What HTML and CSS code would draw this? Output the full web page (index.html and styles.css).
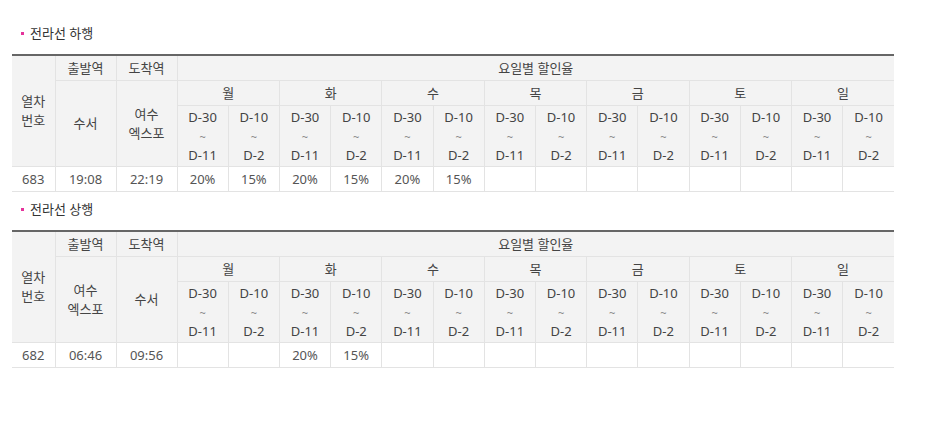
FILE: index.html
```html
<!DOCTYPE html>
<html lang="ko">
<head>
<meta charset="utf-8">
<title>전라선 할인율</title>
<link rel="stylesheet" href="styles.css">
</head>
<body>
<div class="wrap">
  <h3 class="tit">전라선 하행</h3>
  <table class="tbl">
    <colgroup>
      <col class="c-no"><col class="c-st"><col class="c-st">
      <col><col><col><col><col><col><col><col><col><col><col><col><col><col>
    </colgroup>
    <thead>
      <tr class="r1">
        <th rowspan="3">열차<br>번호</th>
        <th>출발역</th>
        <th>도착역</th>
        <th colspan="14">요일별 할인율</th>
      </tr>
      <tr class="r2">
        <th rowspan="2">수서</th>
        <th rowspan="2">여수<br>엑스포</th>
        <th colspan="2">월</th><th colspan="2">화</th><th colspan="2">수</th><th colspan="2">목</th><th colspan="2">금</th><th colspan="2">토</th><th colspan="2">일</th>
      </tr>
      <tr class="r3">
        <th>D-30<br><span class="tl">~</span><br>D-11</th><th>D-10<br><span class="tl">~</span><br>D-2</th>
        <th>D-30<br><span class="tl">~</span><br>D-11</th><th>D-10<br><span class="tl">~</span><br>D-2</th>
        <th>D-30<br><span class="tl">~</span><br>D-11</th><th>D-10<br><span class="tl">~</span><br>D-2</th>
        <th>D-30<br><span class="tl">~</span><br>D-11</th><th>D-10<br><span class="tl">~</span><br>D-2</th>
        <th>D-30<br><span class="tl">~</span><br>D-11</th><th>D-10<br><span class="tl">~</span><br>D-2</th>
        <th>D-30<br><span class="tl">~</span><br>D-11</th><th>D-10<br><span class="tl">~</span><br>D-2</th>
        <th>D-30<br><span class="tl">~</span><br>D-11</th><th>D-10<br><span class="tl">~</span><br>D-2</th>
      </tr>
    </thead>
    <tbody>
      <tr>
        <td>683</td><td>19:08</td><td>22:19</td>
        <td>20%</td><td>15%</td><td>20%</td><td>15%</td><td>20%</td><td>15%</td>
        <td></td><td></td><td></td><td></td><td></td><td></td><td></td><td></td>
      </tr>
    </tbody>
  </table>

  <h3 class="tit">전라선 상행</h3>
  <table class="tbl">
    <colgroup>
      <col class="c-no"><col class="c-st"><col class="c-st">
      <col><col><col><col><col><col><col><col><col><col><col><col><col><col>
    </colgroup>
    <thead>
      <tr class="r1">
        <th rowspan="3">열차<br>번호</th>
        <th>출발역</th>
        <th>도착역</th>
        <th colspan="14">요일별 할인율</th>
      </tr>
      <tr class="r2">
        <th rowspan="2">여수<br>엑스포</th>
        <th rowspan="2">수서</th>
        <th colspan="2">월</th><th colspan="2">화</th><th colspan="2">수</th><th colspan="2">목</th><th colspan="2">금</th><th colspan="2">토</th><th colspan="2">일</th>
      </tr>
      <tr class="r3">
        <th>D-30<br><span class="tl">~</span><br>D-11</th><th>D-10<br><span class="tl">~</span><br>D-2</th>
        <th>D-30<br><span class="tl">~</span><br>D-11</th><th>D-10<br><span class="tl">~</span><br>D-2</th>
        <th>D-30<br><span class="tl">~</span><br>D-11</th><th>D-10<br><span class="tl">~</span><br>D-2</th>
        <th>D-30<br><span class="tl">~</span><br>D-11</th><th>D-10<br><span class="tl">~</span><br>D-2</th>
        <th>D-30<br><span class="tl">~</span><br>D-11</th><th>D-10<br><span class="tl">~</span><br>D-2</th>
        <th>D-30<br><span class="tl">~</span><br>D-11</th><th>D-10<br><span class="tl">~</span><br>D-2</th>
        <th>D-30<br><span class="tl">~</span><br>D-11</th><th>D-10<br><span class="tl">~</span><br>D-2</th>
      </tr>
    </thead>
    <tbody>
      <tr>
        <td>682</td><td>06:46</td><td>09:56</td>
        <td></td><td></td><td>20%</td><td>15%</td><td></td><td></td>
        <td></td><td></td><td></td><td></td><td></td><td></td><td></td><td></td>
      </tr>
    </tbody>
  </table>
</div>
</body>
</html>
```

FILE: styles.css
```css
html, body {
  margin: 0;
  padding: 0;
  background: #fff;
}
body {
  font-family: "Noto Sans", "Noto Sans CJK KR", sans-serif;
  font-size: 13px;
  color: #555;
}
.wrap {
  width: 882px;
  padding: 23px 0 0 12px;
}
.tit {
  position: relative;
  margin: 0 0 11px 0;
  padding-left: 18px;
  font-size: 13px;
  line-height: 20px;
  font-weight: normal;
  color: #333;
}
.tit::before {
  content: "";
  position: absolute;
  left: 9px;
  top: 9px;
  width: 3px;
  height: 3px;
  background: #e5329b;
}
.tbl + .tit {
  margin-top: 7px;
}
.tbl {
  width: 882px;
  border-collapse: collapse;
  table-layout: fixed;
  border-top: 2px solid #666;
}
.c-no { width: 43px; }
.c-st { width: 61px; }
.tbl th,
.tbl td {
  padding: 0;
  text-align: center;
  vertical-align: middle;
  border: 1px solid #e3e3e3;
  font-weight: normal;
  line-height: 19px;
}
.tbl th:first-child,
.tbl td:first-child {
  border-left: none;
}
.tbl th {
  background: #f3f3f3;
  color: #444;
}
.tbl tr.r1 th:last-child,
.tbl tr.r2 th:last-child,
.tbl tr.r3 th:last-child,
.tbl td:last-child {
  border-right: none;
}
.tbl tr.r1 th {
  border-top: none;
  height: 24px;
}
.tbl tr.r2 th {
  height: 24px;
}
.tbl tr.r3 th {
  height: 60px;
}
.tbl td {
  background: #fff;
  height: 24px;
}
.tl {
  font-size: 11px;
  color: #888;
}
```
